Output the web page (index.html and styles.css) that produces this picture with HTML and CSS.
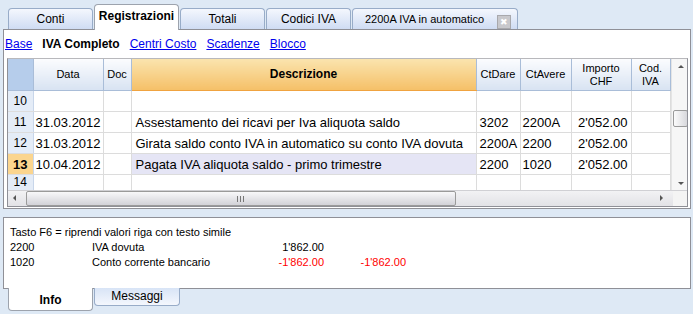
FILE: index.html
```html
<!DOCTYPE html>
<html lang="it">
<head>
  <meta charset="UTF-8">
  <title>Registrazioni</title>
  <link rel="stylesheet" href="styles.css">
</head>
<body>
  <div class="tabs">
    <div class="tab">Conti</div>
    <div class="tab active">Registrazioni</div>
    <div class="tab">Totali</div>
    <div class="tab">Codici IVA</div>
    <div class="tab wide">2200A IVA in automatico <span class="close">&#x2716;</span></div>
  </div>

  <div class="panel">
    <div class="views">
      <a href="#">Base</a>
      <b>IVA Completo</b>
      <a href="#">Centri Costo</a>
      <a href="#">Scadenze</a>
      <a href="#">Blocco</a>
    </div>

    <div class="grid">
      <div class="grid-main">
        <table>
          <colgroup>
            <col style="width:25px"><col style="width:70px"><col style="width:28px"><col style="width:345px">
            <col style="width:44px"><col style="width:51px"><col style="width:60px"><col style="width:39px">
          </colgroup>
          <thead>
            <tr>
              <th class="corner"></th>
              <th>Data</th>
              <th>Doc</th>
              <th class="sel">Descrizione</th>
              <th>CtDare</th>
              <th>CtAvere</th>
              <th>Importo<br>CHF</th>
              <th>Cod.<br>IVA</th>
            </tr>
          </thead>
          <tbody>
            <tr><td class="num">10</td><td></td><td></td><td></td><td></td><td></td><td></td><td></td></tr>
            <tr><td class="num">11</td><td>31.03.2012</td><td></td><td class="desc">Assestamento dei ricavi per Iva aliquota saldo</td><td class="acc">3202</td><td>2200A</td><td class="amt">2'052.00</td><td></td></tr>
            <tr><td class="num">12</td><td>31.03.2012</td><td></td><td class="desc">Girata saldo conto IVA in automatico su conto IVA dovuta</td><td class="acc">2200A</td><td>2200</td><td class="amt">2'052.00</td><td></td></tr>
            <tr class="current"><td class="num">13</td><td>10.04.2012</td><td></td><td class="desc">Pagata IVA aliquota saldo - primo trimestre</td><td class="acc">2200</td><td>1020</td><td class="amt">2'052.00</td><td></td></tr>
            <tr class="cut"><td class="num">14</td><td></td><td></td><td></td><td></td><td></td><td></td><td></td></tr>
          </tbody>
        </table>
        <div class="vscroll">
          <span class="arrow up"></span>
          <span class="vthumb"></span>
          <span class="arrow down"></span>
        </div>
      </div>
      <div class="hscroll">
        <span class="arrow left"></span>
        <span class="hthumb"><span class="grip"></span></span>
        <span class="arrow right"></span>
        <span class="corner-box"></span>
      </div>
    </div>
  </div>

  <div class="info">
    <div>Tasto F6 = riprendi valori riga con testo simile</div>
    <div class="line"><span class="c1">2200</span><span class="c2">IVA dovuta</span><span class="c3">1'862.00</span></div>
    <div class="line"><span class="c1">1020</span><span class="c2">Conto corrente bancario</span><span class="c3 neg">-1'862.00</span><span class="c4 neg">-1'862.00</span></div>
  </div>

  <div class="btabs">
    <div class="btab active">Info</div>
    <div class="btab">Messaggi</div>
  </div>
</body>
</html>
```

FILE: styles.css
```css
body {
  margin: 0;
  background: #dee9f5;
  font-family: "Liberation Sans", Arial, sans-serif;
  font-size: 11px;
  color: #000;
  width: 693px;
  height: 314px;
  overflow: hidden;
}

/* top tabs */
.tabs {
  display: flex;
  align-items: flex-end;
  height: 29px;
  padding-left: 8px;
  gap: 1px;
}
.tab {
  box-sizing: border-box;
  width: 85px;
  height: 21px;
  border: 1px solid #98acc8;
  border-bottom: none;
  border-radius: 4px 4px 0 0;
  background: linear-gradient(#f4f7fd, #cfdcf3);
  text-align: center;
  line-height: 20px;
  font-size: 12px;
}
.tab.active {
  height: 26px;
  background: #fff;
  border-color: #9da3ad;
  font-weight: bold;
  line-height: 22px;
  position: relative;
  top: 1px;
}
.tab.wide {
  width: 166px;
  padding-left: 12px;
  text-align: left;
  font-size: 11px;
}
.close {
  display: inline-block;
  width: 12px;
  height: 12px;
  margin-left: 10px;
  background: #c8c8cc;
  border: 1px solid #a8a8ac;
  color: #fff;
  font-size: 9px;
  line-height: 12px;
  text-align: center;
  vertical-align: -2px;
}

/* main panel */
.panel {
  margin: 0 2px 0 3px;
  height: 180px;
  background: #fff;
  border: 1px solid #8f9097;
  box-sizing: border-box;
  padding: 0 2px 0 3px;
}
.views {
  display: flex;
  gap: 10px;
  height: 28px;
  align-items: center;
  margin-left: -2px;
  font-size: 12px;
}
.views a {
  color: #0000ee;
}

.grid {
  border: 1px solid #8f9097;
  border-top-color: #b8b8bc;
  width: 681px;
  box-sizing: border-box;
}
.grid-main {
  display: flex;
  height: 131px;
  overflow: hidden;
}
table {
  border-collapse: collapse;
  table-layout: fixed;
  width: 662px;
}
th {
  height: 31px;
  padding: 0;
  font-weight: normal;
  font-size: 11px;
  line-height: 13px;
  background: linear-gradient(#fbfcfe, #d8e3f2);
  border-right: 1px solid #a9bdd8;
  border-bottom: 1px solid #a9bdd8;
  text-align: center;
}
th.corner {
  background: #b6cdeb;
}
th.sel {
  background: linear-gradient(#fae4ae, #f5c068);
  border-bottom-color: #f0a340;
  font-weight: bold;
  font-size: 12px;
}
td {
  height: 20px;
  padding: 0 2px;
  border-right: 1px solid #dcdcdc;
  border-bottom: 1px solid #dcdcdc;
  font-size: 13px;
  white-space: nowrap;
  overflow: hidden;
}
td.num {
  background: #e4ecf7;
  text-align: center;
  font-size: 12px;
  border-right-color: #c8d6ea;
}
td.desc {
  padding-left: 4px;
}
td.acc {
  padding-left: 3px;
}
td.amt {
  text-align: right;
  padding-right: 3px;
}
tr.current td.num {
  background: #fbd58e;
  font-weight: bold;
  font-size: 13px;
}
tr.current td.desc {
  background: #e5e5f5;
}
tr.cut td {
  height: 16px;
  border-bottom: none;
  vertical-align: top;
}

/* scrollbars */
.vscroll {
  width: 18px;
  position: relative;
  background: #f6f6f6;
  border-left: 1px solid #e4e4e4;
}
.vthumb {
  position: absolute;
  left: 1px;
  top: 51px;
  width: 15px;
  height: 17px;
  border: 1px solid #9a9a9a;
  border-radius: 2px;
  box-sizing: border-box;
  background: linear-gradient(90deg, #fbfbfb, #d8d8dc);
}
.arrow {
  position: absolute;
  width: 0;
  height: 0;
  border: 3px solid transparent;
}
.arrow.up {
  top: 6px;
  left: 6px;
  border-bottom-color: #555;
  border-top: none;
}
.arrow.down {
  bottom: 5px;
  left: 6px;
  border-top-color: #555;
  border-bottom: none;
}
.hscroll {
  height: 15px;
  position: relative;
  background: linear-gradient(#f2f2f4, #e2e2e6);
  border-top: 1px solid #d0d0d4;
}
.arrow.left {
  left: 5px;
  top: 4px;
  border-right-color: #555;
  border-left: none;
}
.arrow.right {
  left: 652px;
  top: 4px;
  border-left-color: #555;
  border-right: none;
}
.hthumb {
  position: absolute;
  left: 18px;
  top: 0;
  width: 430px;
  height: 15px;
  box-sizing: border-box;
  border: 1px solid #9a9a9a;
  border-radius: 2px;
  background: linear-gradient(#f8f8fa, #d2d2d8);
}
.grip {
  position: absolute;
  left: 210px;
  top: 4px;
  width: 7px;
  height: 6px;
  background: repeating-linear-gradient(90deg, #777 0 1px, transparent 1px 3px);
}
.corner-box {
  position: absolute;
  right: 0;
  top: 0;
  width: 14px;
  height: 15px;
  background: #f4f4f4;
}

/* info panel */
.info {
  margin: 8px 2px 0 3px;
  height: 72px;
  box-sizing: border-box;
  background: #fff;
  border: 1px solid #8f9097;
  padding: 7px 6px 0;
  line-height: 15px;
}
.line {
  display: flex;
}
.c1 { width: 82px; }
.c2 { width: 150px; }
.c3 { width: 82px; text-align: right; }
.c4 { width: 82px; text-align: right; }
.neg { color: #ff0000; }

.btabs {
  display: flex;
  padding-left: 8px;
  gap: 1px;
  margin-top: -1px;
}
.btab {
  box-sizing: border-box;
  width: 86px;
  height: 18px;
  border: 1px solid #98acc8;
  border-top: none;
  border-radius: 0 0 4px 4px;
  background: linear-gradient(#d8e4f6, #f4f7fd);
  text-align: center;
  line-height: 17px;
  font-size: 12px;
}
.btab.active {
  width: 85px;
  height: 23px;
  background: #fff;
  border-color: #9da3ad;
  font-weight: bold;
  line-height: 24px;
}
```
